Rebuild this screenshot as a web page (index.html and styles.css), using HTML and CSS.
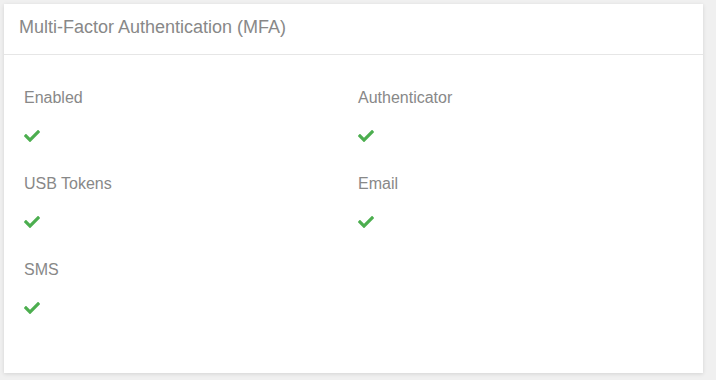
FILE: index.html
```html
<!DOCTYPE html>
<html>
<head>
<meta charset="utf-8">
<link rel="stylesheet" href="styles.css">
</head>
<body>
<div class="card">
  <div class="card-header">Multi-Factor Authentication (MFA)</div>
  <div class="card-body">
    <div class="item">
      <div class="label">Enabled</div>
      <div class="icon"><svg class="check" viewBox="0 64 512 384"><path d="M173.898 439.404l-166.4-166.4c-9.997-9.997-9.997-26.206 0-36.204l36.203-36.204c9.997-9.998 26.207-9.998 36.204 0L192 312.69 432.095 72.596c9.997-9.997 26.207-9.997 36.204 0l36.203 36.204c9.997 9.997 9.997 26.206 0 36.204l-294.4 294.401c-9.998 9.997-26.207 9.997-36.204-.001z"/></svg></div>
    </div>
    <div class="item">
      <div class="label">Authenticator</div>
      <div class="icon"><svg class="check" viewBox="0 64 512 384"><path d="M173.898 439.404l-166.4-166.4c-9.997-9.997-9.997-26.206 0-36.204l36.203-36.204c9.997-9.998 26.207-9.998 36.204 0L192 312.69 432.095 72.596c9.997-9.997 26.207-9.997 36.204 0l36.203 36.204c9.997 9.997 9.997 26.206 0 36.204l-294.4 294.401c-9.998 9.997-26.207 9.997-36.204-.001z"/></svg></div>
    </div>
    <div class="item">
      <div class="label">USB Tokens</div>
      <div class="icon"><svg class="check" viewBox="0 64 512 384"><path d="M173.898 439.404l-166.4-166.4c-9.997-9.997-9.997-26.206 0-36.204l36.203-36.204c9.997-9.998 26.207-9.998 36.204 0L192 312.69 432.095 72.596c9.997-9.997 26.207-9.997 36.204 0l36.203 36.204c9.997 9.997 9.997 26.206 0 36.204l-294.4 294.401c-9.998 9.997-26.207 9.997-36.204-.001z"/></svg></div>
    </div>
    <div class="item">
      <div class="label">Email</div>
      <div class="icon"><svg class="check" viewBox="0 64 512 384"><path d="M173.898 439.404l-166.4-166.4c-9.997-9.997-9.997-26.206 0-36.204l36.203-36.204c9.997-9.998 26.207-9.998 36.204 0L192 312.69 432.095 72.596c9.997-9.997 26.207-9.997 36.204 0l36.203 36.204c9.997 9.997 9.997 26.206 0 36.204l-294.4 294.401c-9.998 9.997-26.207 9.997-36.204-.001z"/></svg></div>
    </div>
    <div class="item">
      <div class="label">SMS</div>
      <div class="icon"><svg class="check" viewBox="0 64 512 384"><path d="M173.898 439.404l-166.4-166.4c-9.997-9.997-9.997-26.206 0-36.204l36.203-36.204c9.997-9.998 26.207-9.998 36.204 0L192 312.69 432.095 72.596c9.997-9.997 26.207-9.997 36.204 0l36.203 36.204c9.997 9.997 9.997 26.206 0 36.204l-294.4 294.401c-9.998 9.997-26.207 9.997-36.204-.001z"/></svg></div>
    </div>
  </div>
</div>
</body>
</html>
```
FILE: styles.css
```css
html, body {
  margin: 0;
  padding: 0;
  background: #f0f0f0;
  font-family: "Liberation Sans", Arial, sans-serif;
}
body {
  padding: 4px 13px 7px 4px;
}
.card {
  background: #fff;
  box-shadow: 0 1px 4px rgba(0, 0, 0, 0.12);
  height: 369px;
  box-sizing: border-box;
}
.card-header {
  padding: 12px 15px 16px;
  font-size: 18px;
  line-height: 22px;
  color: #888;
  border-bottom: 1px solid #e6e6e6;
}
.card-body {
  display: grid;
  grid-template-columns: 334px 1fr;
  row-gap: 28px;
  padding: 33px 20px 20px;
}
.label {
  font-size: 16px;
  line-height: 20px;
  color: #888;
}
.icon {
  margin-top: 18px;
  height: 20px;
  display: flex;
  align-items: center;
}
.check {
  width: 16px;
  height: 12px;
  fill: #4cae4f;
  display: block;
}
```
